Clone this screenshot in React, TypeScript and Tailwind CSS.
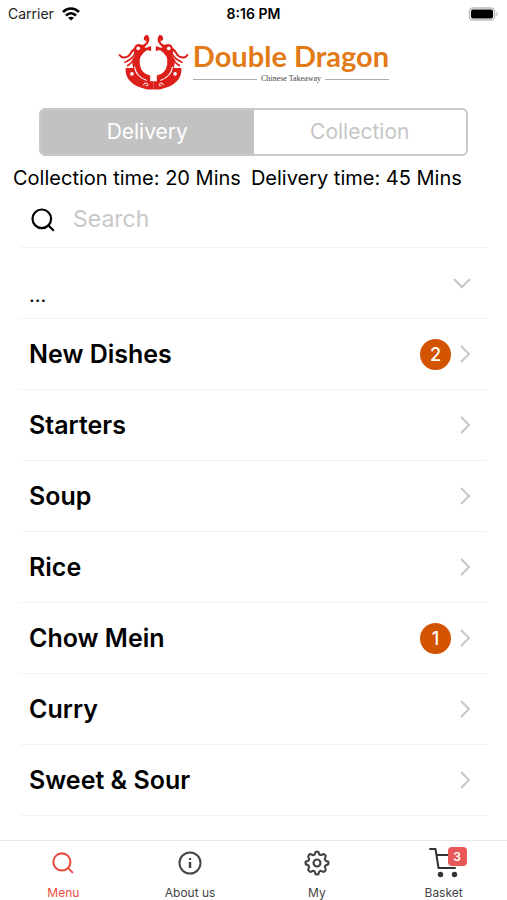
type Item = { name: string; count?: number };

const categories: Item[] = [
  { name: "New Dishes", count: 2 },
  { name: "Starters" },
  { name: "Soup" },
  { name: "Rice" },
  { name: "Chow Mein", count: 1 },
  { name: "Curry" },
  { name: "Sweet & Sour" },
  { name: "Chicken" },
];

function DragonHalf() {
  return (
    <g>
      <path
        d="M88 22C87 14 90 7 97 7C106 9 106 23 101 31C97 38 93 40 90 44C97 48 101 41 110 40L110 55C103 53 99 52 95 54A41 41 0 0 0 107 129L107 146L117 146L117 171L101 171C87 168 57 162 41 139C35 130 32 119 33 106L56 106C51 91 53 77 62 66C56 61 56 53 59 44C63 33 74 32 82 36C91 36 97 28 97 20Z"
        fill="#dc1f1a"
      />
      <g fill="none" stroke="#dc1f1a" strokeLinecap="round" strokeLinejoin="round">
        <path d="M95 22C88 20 90 9 98 9" strokeWidth="5" />
        <path d="M64 48C49 49 51 65 40 71C28 77 19 74 15 67" strokeWidth="6" />
        <path d="M60 64C52 80 41 83 31 89" strokeWidth="5" />
        <path d="M56 80C53 92 44 95 39 99" strokeWidth="5" />
      </g>
      <g fill="none" stroke="#fff" strokeLinecap="round">
        <path d="M60 103C63 124 79 137 95 143" strokeWidth="3.500" />
        <path d="M87 157C87 150 99 149 100 156C101 161 95 162 94 158" strokeWidth="3" />
      </g>
      <circle cx="71" cy="47" r="5.500" fill="#fff" />
      <circle cx="52" cy="124" r="5.500" fill="#fff" />
    </g>
  );
}

function Logo() {
  return (
    <div className="mx-auto flex h-14 w-fit items-start gap-1">
      <svg viewBox="10 4 214 168" className="h-14 w-[71px]" role="img" aria-label="Dragons">
        <DragonHalf />
        <g transform="translate(234 0) scale(-1 1)"><DragonHalf /></g>
      </svg>
      <div className="pt-1">
        <div className="font-['Lato',sans-serif] text-[29px] leading-9 font-bold text-[#e27a17]">Double Dragon</div>
        <div className="mt-px flex items-center gap-1 text-[#444]">
          <span className="h-px flex-1 bg-[#aaa]" />
          <span className="font-['Liberation_Serif',serif] text-[8px] leading-2">Chinese Takeaway</span>
          <span className="h-px flex-1 bg-[#aaa]" />
        </div>
      </div>
    </div>
  );
}

function StatusBar() {
  return (
    <div className="grid h-7 grid-cols-3 items-center px-2 text-[14px] leading-5">
      <div className="flex items-center gap-2 text-[#222]">
        Carrier
        <svg viewBox="0 0 18 14" className="h-3.5 w-[18px]" fill="none" stroke="#000" strokeWidth="2.6">
          <path d="M1 5C5.5 0.3 12.500 0.3 17 5" />
          <path d="M4 8.500C7 5.500 11 5.500 14 8.500" />
          <path d="M9 13.500L6 10.800Q9 8.500 12 10.800Z" fill="#000" stroke="none" />
        </svg>
      </div>
      <div className="text-center font-semibold">8:16 PM</div>
      <svg viewBox="0 0 31 15" className="h-[15px] w-[31px] justify-self-end">
        <rect x="1.500" y="1" width="25" height="12" rx="3.500" fill="#fff" stroke="#bbb" strokeWidth="1.500" />
        <rect x="3" y="2.500" width="22" height="9" rx="2" />
        <path d="M28.500 4.500Q31 7 28.500 9.500Z" fill="#bbb" />
      </svg>
    </div>
  );
}

function SearchIcon({ className }: { className: string }) {
  return (
    <svg viewBox="0 0 24 24" className={className} fill="none" stroke="currentColor" strokeWidth="2.2">
      <circle cx="10.800" cy="10.800" r="9.300" />
      <path d="M17.300 17.300L22.800 22.800" />
    </svg>
  );
}

function InfoIcon() {
  return (
    <svg viewBox="0 0 24 24" className="size-6" fill="none" stroke="currentColor" strokeWidth="2">
      <circle cx="12" cy="12" r="10.500" />
      <path d="M12 11V17" strokeWidth="2.500" />
      <path d="M12 7V9" strokeWidth="2.200" />
    </svg>
  );
}

function GearIcon() {
  return (
    <svg viewBox="0 0 24 24" className="size-[26px]" fill="none" stroke="currentColor" strokeWidth="2" strokeLinejoin="round">
      <path d="M10.300 3.100C10.500 .8 13.500 .8 13.700 3.100C13.900 4.500 15.500 5.100 16.700 4.200C18.500 2.800 20.900 5.200 19.700 7.100C18.800 8.400 19.500 10 20.900 10.300C23.200 10.500 23.200 13.500 20.900 13.700C19.500 14 18.800 15.600 19.700 16.800C20.900 18.800 18.800 20.900 16.800 19.700C15.600 18.800 14 19.500 13.700 20.900C13.500 23.200 10.500 23.200 10.300 20.900C10 19.500 8.400 18.800 7.200 19.700C5.200 20.900 3.100 18.800 4.300 16.800C5.200 15.600 4.500 14 3.100 13.700C.8 13.500 .8 10.500 3.100 10.300C4.500 10 5.200 8.400 4.300 7.200C3.100 5.200 5.200 3.100 7.200 4.300C8.400 5.200 10 4.500 10.300 3.100Z" />
      <circle cx="12" cy="12" r="3.200" />
    </svg>
  );
}

function CartIcon() {
  return (
    <svg viewBox="0 0 30 32" className="h-8 w-[30px]" fill="none" stroke="#333" strokeWidth="2" strokeLinecap="round" strokeLinejoin="round">
      <path d="M1 2H6.500L9.500 21H26M8 8H27L25 17" />
      <circle cx="11.500" cy="27.500" r="1.700" fill="#333" />
      <circle cx="25.500" cy="27.500" r="1.700" fill="#333" />
    </svg>
  );
}

const tab = "flex flex-col items-center pt-1 text-[12px] leading-4 text-[#444]";
const row = "flex h-[71px] w-full items-center border-b border-[#f3f3f3] pr-4 pl-[9px] text-left";

export default function App() {
  return (
    <div className="flex h-screen flex-col overflow-hidden bg-white font-['Inter',sans-serif] text-black">
      <header className="shrink-0">
        <StatusBar />
        <div className="pt-1.5"><Logo /></div>
        <div className="mx-[39px] mt-[18px] grid h-12 grid-cols-2 overflow-hidden rounded-md border-2 border-[#c9c9c9] text-[21px]">
          <button className="bg-[#c2c2c2] text-white">Delivery</button>
          <button className="text-[#c6c6c6]">Collection</button>
        </div>
        <div className="mt-2 flex gap-2.5 px-[13px] text-[20px] leading-7 whitespace-nowrap">
          <p>Collection time: 20 Mins</p>
          <p>Delivery time: 45 Mins</p>
        </div>
        <label className="mx-5 flex h-14 items-center gap-[18px] border-b border-[#f3f3f3] pl-[11px]">
          <SearchIcon className="size-6" />
          <input aria-label="Search" placeholder="Search" className="min-w-0 flex-1 text-[23px] outline-none placeholder:text-[#c8c8c8]" />
        </label>
      </header>
      <main className="mx-5 min-h-0 flex-1 overflow-hidden">
        <button className={`${row} justify-between`} aria-label="Expand details">
          <span className="pt-6 text-[20px] leading-7">...</span>
          <svg viewBox="0 0 18 12" className="h-3 w-[18px]" fill="none" stroke="#c6c6c6" strokeWidth="2"><path d="M1 2L9 10L17 2" /></svg>
        </button>
        {categories.map((c) => (
          <button key={c.name} className={row}>
            <span className="flex-1 text-[25px] leading-8 font-semibold">{c.name}</span>
            {c.count && <span className="mr-2 grid size-[31px] place-items-center rounded-full bg-[#d35400] text-[18px] font-medium text-white">{c.count}</span>}
            <svg viewBox="0 0 12 18" className="h-[18px] w-3" fill="none" stroke="#c6c6c6" strokeWidth="2"><path d="M2 1L10 9L2 17" /></svg>
          </button>
        ))}
      </main>
      <nav className="grid h-[60px] shrink-0 grid-cols-4 border-t border-[#e9e9e9] bg-white">
        <button className={tab}>
          <span className="grid h-9 place-items-center text-[#e74c3c]"><SearchIcon className="size-[22px]" /></span>
          <span className="mt-1 text-[#e74c3c]">Menu</span>
        </button>
        <button className={tab}>
          <span className="grid h-9 place-items-center"><InfoIcon /></span>
          <span className="mt-1">About us</span>
        </button>
        <button className={tab}>
          <span className="grid h-9 place-items-center"><GearIcon /></span>
          <span className="mt-1">My</span>
        </button>
        <button className={tab}>
          <span className="relative grid h-9 place-items-center">
            <CartIcon />
            <span className="absolute top-0.5 -right-2 grid size-[19px] place-items-center rounded-sm bg-[#e95858] text-[12px] font-semibold text-white">3</span>
          </span>
          <span className="mt-1">Basket</span>
        </button>
      </nav>
    </div>
  );
}
